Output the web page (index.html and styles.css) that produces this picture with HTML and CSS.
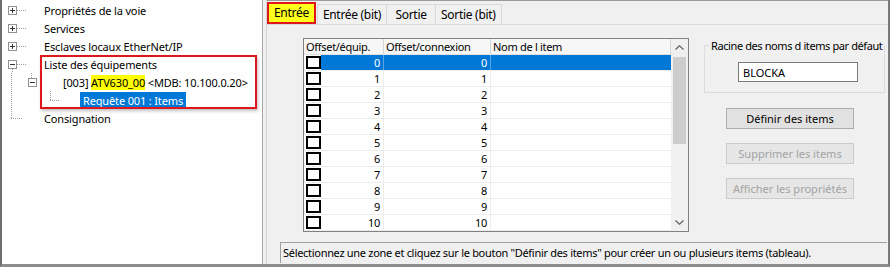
FILE: index.html
```html
<!DOCTYPE html>
<html lang="fr">
<head>
    <meta charset="UTF-8">
    <title>Liste des équipements</title>
    <link rel="stylesheet" href="styles.css">
</head>
<body>
    <div class="window">
        <div class="tree">
            <div class="node">
                <span class="g exp plus"></span><span class="label l0">Propriétés de la voie</span>
            </div>
            <div class="node">
                <span class="g exp plus"></span><span class="label l0">Services</span>
            </div>
            <div class="node">
                <span class="g exp plus"></span><span class="label l0">Esclaves locaux EtherNet/IP</span>
            </div>
            <div class="node">
                <span class="g exp open"></span><span class="label l0">Liste des équipements</span>
            </div>
            <div class="node">
                <span class="g line"></span><span class="g exp stem"></span><span class="label l1">[003] <mark>ATV630_00</mark> &lt;MDB: 10.100.0.20&gt;</span>
            </div>
            <div class="node">
                <span class="g line"></span><span class="g"></span><span class="g corner"></span><span class="label l2 selected">Requête 001 : Items</span>
            </div>
            <div class="node">
                <span class="g last"></span><span class="label l0">Consignation</span>
            </div>
            <!-- red annotation frame -->
            <div class="callout"></div>
        </div>
        <div class="splitter"></div>
        <div class="main">
            <div class="tabs">
                <div class="tab active">Entrée</div>
                <div class="tab">Entrée (bit)</div>
                <div class="tab">Sortie</div>
                <div class="tab">Sortie (bit)</div>
            </div>
            <div class="page">
                <div class="page-top">
                    <div class="grid">
                        <div class="gbody">
                            <div class="ghead">
                                <span class="h1">Offset/équip.</span>
                                <span class="h2">Offset/connexion</span>
                                <span class="h3">Nom de l item</span>
                            </div>
                            <div class="row sel"><span class="chk"></span><span class="c1">0</span><span class="c2">0</span><span class="c3"></span></div>
                            <div class="row"><span class="chk"></span><span class="c1">1</span><span class="c2">1</span><span class="c3"></span></div>
                            <div class="row"><span class="chk"></span><span class="c1">2</span><span class="c2">2</span><span class="c3"></span></div>
                            <div class="row"><span class="chk"></span><span class="c1">3</span><span class="c2">3</span><span class="c3"></span></div>
                            <div class="row"><span class="chk"></span><span class="c1">4</span><span class="c2">4</span><span class="c3"></span></div>
                            <div class="row"><span class="chk"></span><span class="c1">5</span><span class="c2">5</span><span class="c3"></span></div>
                            <div class="row"><span class="chk"></span><span class="c1">6</span><span class="c2">6</span><span class="c3"></span></div>
                            <div class="row"><span class="chk"></span><span class="c1">7</span><span class="c2">7</span><span class="c3"></span></div>
                            <div class="row"><span class="chk"></span><span class="c1">8</span><span class="c2">8</span><span class="c3"></span></div>
                            <div class="row"><span class="chk"></span><span class="c1">9</span><span class="c2">9</span><span class="c3"></span></div>
                            <div class="row"><span class="chk"></span><span class="c1">10</span><span class="c2">10</span><span class="c3"></span></div>
                        </div>
                        <div class="vscroll">
                            <div class="arrow">
                                <svg width="9" height="5" viewBox="0 0 9 5"><polyline points="0.5,4.5 4.5,0.8 8.5,4.5" fill="none" stroke="#606060" stroke-width="1.2"/></svg>
                            </div>
                            <div class="track"><div class="thumb"></div></div>
                            <div class="arrow">
                                <svg width="9" height="5" viewBox="0 0 9 5"><polyline points="0.5,0.5 4.5,4.2 8.5,0.5" fill="none" stroke="#606060" stroke-width="1.2"/></svg>
                            </div>
                        </div>
                    </div>
                    <div class="side">
                        <fieldset class="group">
                            <legend>Racine des noms d items par défaut</legend>
                            <input class="name" type="text" value="BLOCKA">
                        </fieldset>
                        <div class="buttons">
                            <button type="button" class="btn">Définir des items</button>
                            <button type="button" class="btn" disabled>Supprimer les items</button>
                            <button type="button" class="btn" disabled>Afficher les propriétés</button>
                        </div>
                    </div>
                </div>
                <div class="status">Sélectionnez une zone et cliquez sur le bouton "Définir des items" pour créer un ou plusieurs items (tableau).</div>
            </div>
        </div>
    </div>
</body>
</html>
```

FILE: styles.css
```css
body {
    margin: 0;
    background: white;
    font-family: "Noto Sans", "Liberation Sans", sans-serif;
    font-size: 11px;
    letter-spacing: -0.3px;
    color: #000;
    overflow: hidden;
}
.window {
    display: flex;
    width: 890px;
    height: 267px;
    box-sizing: border-box;
    border-left: 2px solid #6e6e6e;
    border-right: 2px solid #7a7a7a;
    border-bottom: 3px solid #8c8c8c;
}

/* tree */
.tree {
    position: relative;
    width: 260px;
    flex: none;
    padding-top: 1px;
    background: white;
    border-right: 1px solid #a8a8a8;
    overflow: hidden;
    letter-spacing: -0.15px;
}
.node {
    display: flex;
    align-items: center;
    height: 18px;
    white-space: nowrap;
}
.g {
    position: relative;
    flex: none;
    width: 20px;
    height: 18px;
    background-repeat: no-repeat;
}
.exp::before {
    content: "";
    position: absolute;
    left: 6px;
    top: 5px;
    width: 7px;
    height: 7px;
    border: 1px solid #919191;
    background: linear-gradient(#333, #333) center / 5px 1px no-repeat, white;
}
.plus::before {
    background: linear-gradient(#333, #333) center / 5px 1px no-repeat,
                linear-gradient(#333, #333) center / 1px 5px no-repeat, white;
}
.plus::after, .open::after {
    content: "";
    position: absolute;
    left: 15px;
    top: 9px;
    width: 9px;
    border-top: 1px dotted #a0a0a0;
}
.open {
    background-image: repeating-linear-gradient(#a0a0a0 0 1px, transparent 1px 2px);
    background-size: 1px 4px;
    background-position: 10px 14px;
}
.line {
    background-image: repeating-linear-gradient(#a0a0a0 0 1px, transparent 1px 2px);
    background-size: 1px 18px;
    background-position: 9px 0;
}
.stem {
    background-image: repeating-linear-gradient(#a0a0a0 0 1px, transparent 1px 2px);
    background-size: 1px 5px;
    background-position: 9px 0;
}
.corner {
    background-image: repeating-linear-gradient(#a0a0a0 0 1px, transparent 1px 2px),
                      repeating-linear-gradient(to right, #a0a0a0 0 1px, transparent 1px 2px);
    background-size: 1px 9px, 10px 1px;
    background-position: 8px 0, 8px 9px;
}
.last {
    background-image: repeating-linear-gradient(#a0a0a0 0 1px, transparent 1px 2px),
                      repeating-linear-gradient(to right, #a0a0a0 0 1px, transparent 1px 2px);
    background-size: 1px 9px, 12px 1px;
    background-position: 9px 0, 9px 9px;
}
.label {
    display: inline-block;
    line-height: 17px;
    padding: 0 2px;
}
.l0 { margin-left: 20px; }
.l1 { margin-left: 19px; }
.l2 { margin-left: 18px; padding: 0 3px; }
.selected {
    background: #0078d7;
    color: white;
}
mark {
    background: #ffff00;
    color: #000;
}
.callout {
    position: absolute;
    left: 38px;
    top: 55px;
    width: 213px;
    height: 50px;
    border: 2px solid #e0161d;
    box-shadow: 1px 2px 3px rgba(0, 0, 0, 0.25);
}

.splitter {
    width: 3px;
    flex: none;
    background: #f0f0f0;
    border-right: 1px solid #d4d4d4;
}

/* right side */
.main {
    flex: 1;
    display: flex;
    flex-direction: column;
    background: #f0f0f0;
    border-top: 1px solid #9a9a9a;
}
.tabs {
    display: flex;
    align-items: flex-end;
    height: 23px;
    border-bottom: 1px solid #dadada;
}
.tab {
    box-sizing: border-box;
    min-width: 50px;
    height: 20px;
    line-height: 19px;
    padding: 0 5px;
    border: 1px solid #d9d9d9;
    border-bottom: none;
    margin-left: -1px;
    font-size: 12px;
    text-align: center;
}
.tab.active {
    min-width: 0;
    height: 22px;
    line-height: 18px;
    margin-left: 0;
    margin-right: 2px;
    padding: 0 5px;
    border: 2px solid #e0161d;
    background: #ffff1e;
}
.page {
    flex: 1;
    display: flex;
    flex-direction: column;
}
.page-top {
    display: flex;
    gap: 15px;
    padding: 13px 0 0 36px;
}

/* grid */
.grid {
    display: flex;
    width: 384px;
    border: 1px solid #828282;
    background: white;
}
.gbody {
    flex: 1;
}
.ghead {
    display: flex;
    height: 15px;
    line-height: 15px;
    border-bottom: 1px solid #e0e0e0;
    background: #f7f7f7;
}
.ghead span {
    padding-left: 2px;
    border-right: 1px solid #d5d5d5;
    box-sizing: border-box;
}
.h1 { width: 80px; }
.h2 { width: 107px; }
.h3 { flex: 1; }
.row {
    display: flex;
    height: 15px;
    line-height: 15px;
    border-bottom: 1px solid #ececec;
}
.row span {
    box-sizing: border-box;
}
.row .chk {
    width: 15px;
    height: 13px;
    margin: 1px 0 0 2px;
    border: 2px solid #000;
    background: white;
    flex: none;
}
.c1, .c2 {
    text-align: right;
    padding-right: 3px;
    border-right: 1px solid #ececec;
}
.c1 { width: 63px; }
.c2 { width: 107px; }
.c3 { flex: 1; }
.sel .c1, .sel .c2, .sel .c3 {
    background: #0078d7;
    color: white;
    border-right-color: #5aa5e4;
}
.vscroll {
    width: 17px;
    display: flex;
    flex-direction: column;
    background: #f0f0f0;
}
.arrow {
    height: 17px;
    display: flex;
    align-items: center;
    justify-content: center;
}
.track {
    flex: 1;
    padding: 1px 2px 0;
}
.thumb {
    height: 87px;
    background: #cdcdcd;
}

/* side panel */
.side {
    width: 180px;
}
.group {
    margin: 0;
    padding: 0 0 10px 0;
    border: 1px solid #dcdcdc;
}
.group legend {
    margin-left: 4px;
    padding: 0 2px;
    line-height: 15px;
    white-space: nowrap;
    letter-spacing: -0.4px;
}
.name {
    display: block;
    margin: 9px 0 0 33px;
    width: 120px;
    height: 20px;
    box-sizing: border-box;
    border: 1px solid #7a7a7a;
    padding: 0 4px;
    font: inherit;
    color: #000;
    background: white;
}
.buttons {
    display: flex;
    flex-direction: column;
    gap: 14px;
    margin: 15px 0 0 22px;
}
.btn {
    width: 128px;
    height: 21px;
    padding: 0;
    font: inherit;
    color: #000;
    background: #e1e1e1;
    border: 1px solid #adadad;
}
.btn:disabled {
    color: #a3a3a3;
    background: #e6e6e6;
    border-color: #cbcbcb;
}
.status {
    margin: 10px 1px 0 13px;
    height: 21px;
    line-height: 20px;
    padding-left: 2px;
    box-sizing: border-box;
    border-top: 1px solid #a0a0a0;
    border-left: 1px solid #a0a0a0;
    white-space: nowrap;
    overflow: hidden;
}
```
